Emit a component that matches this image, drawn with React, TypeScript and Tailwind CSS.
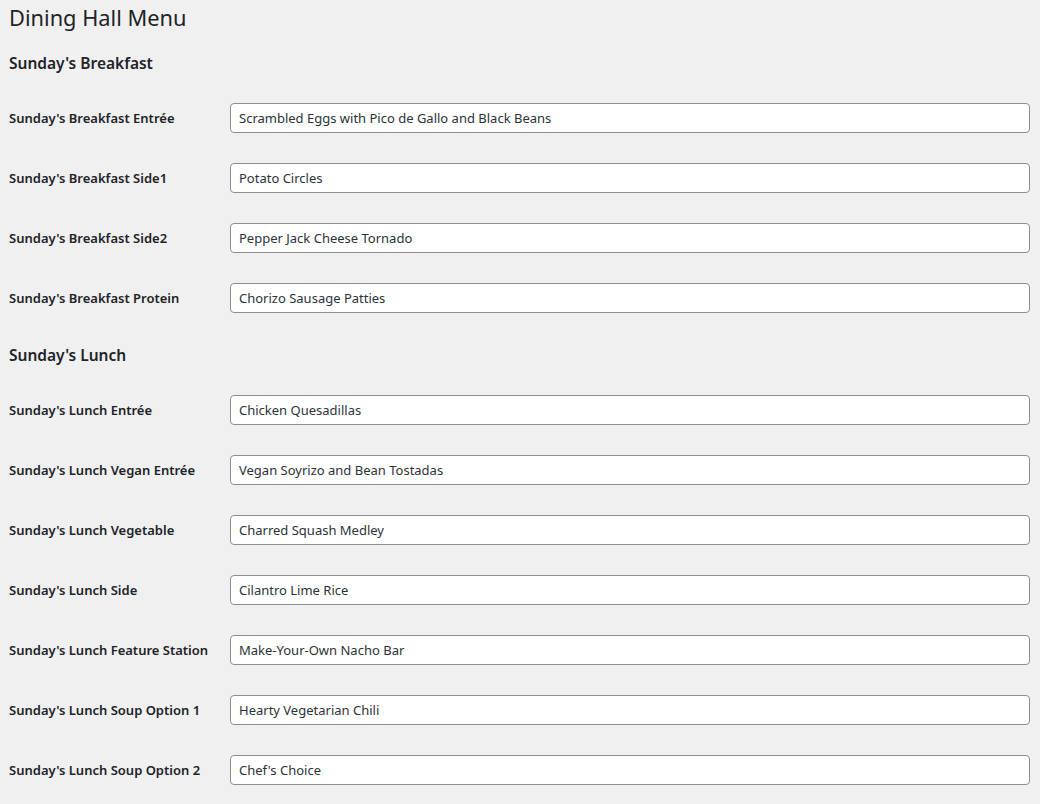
const sections = [
  {
    title: "Sunday's Breakfast",
    fields: [
      ["Sunday's Breakfast Entrée", "Scrambled Eggs with Pico de Gallo and Black Beans"],
      ["Sunday's Breakfast Side1", "Potato Circles"],
      ["Sunday's Breakfast Side2", "Pepper Jack Cheese Tornado"],
      ["Sunday's Breakfast Protein", "Chorizo Sausage Patties"],
    ],
  },
  {
    title: "Sunday's Lunch",
    fields: [
      ["Sunday's Lunch Entrée", "Chicken Quesadillas"],
      ["Sunday's Lunch Vegan Entrée", "Vegan Soyrizo and Bean Tostadas"],
      ["Sunday's Lunch Vegetable", "Charred Squash Medley"],
      ["Sunday's Lunch Side", "Cilantro Lime Rice"],
      ["Sunday's Lunch Feature Station", "Make-Your-Own Nacho Bar"],
      ["Sunday's Lunch Soup Option 1", "Hearty Vegetarian Chili"],
      ["Sunday's Lunch Soup Option 2", "Chef's Choice"],
    ],
  },
];

export default function App() {
  return (
    <div className="min-h-screen bg-[#f0f0f1] pl-[9px] text-[#1d2327] [font-family:'Noto_Sans',sans-serif]">
      <h1 className="flex h-[36px] items-center text-[21.8px] font-normal leading-none">Dining Hall Menu</h1>
      {sections.map((s) => (
        <section key={s.title}>
          <h2 className="flex h-[52px] items-center pt-[4px] text-[15.5px] font-semibold">{s.title}</h2>
          {s.fields.map(([label, value]) => (
            <div key={label} className="flex h-[60px] items-center">
              <label className="w-[221px] shrink-0 pt-[2px] text-[13px] font-semibold">{label}</label>
              <input
                type="text"
                defaultValue={value}
                className="h-[30px] w-[800px] rounded-[4px] border border-[#8c8f94] bg-white px-[8px] text-[13px] text-[#2c3338] outline-none"
              />
            </div>
          ))}
        </section>
      ))}
    </div>
  );
}
